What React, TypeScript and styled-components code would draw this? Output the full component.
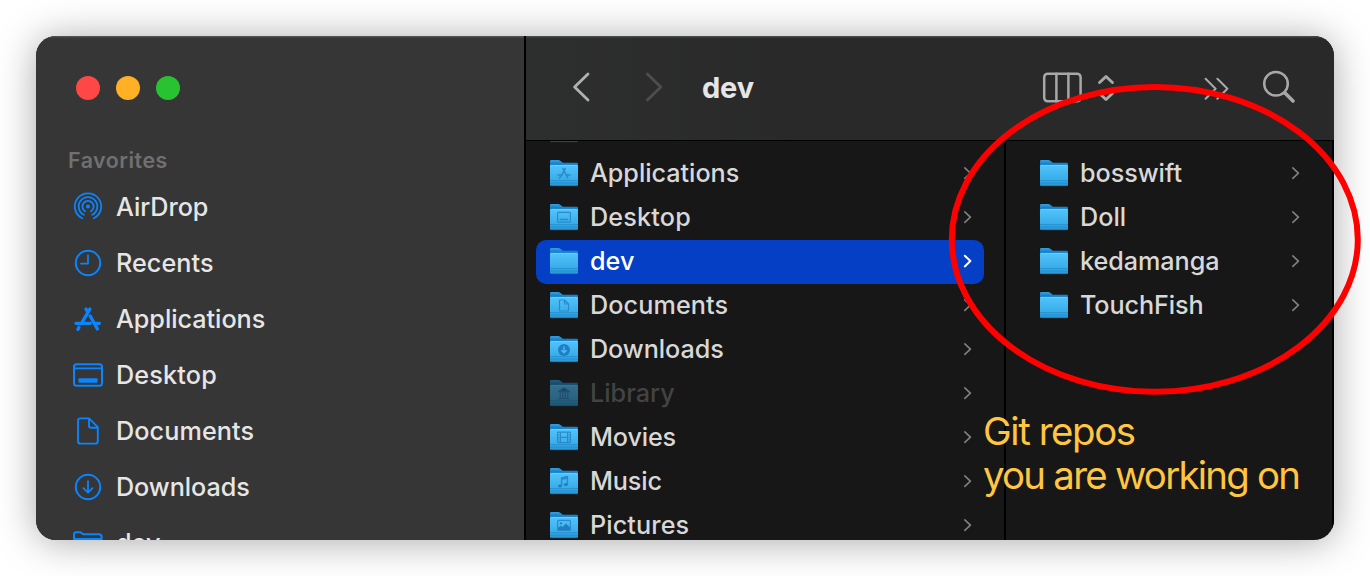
import React from 'react';
import styled, { createGlobalStyle } from 'styled-components';

const GlobalStyle = createGlobalStyle`
  * { box-sizing: border-box; }
  body { margin: 0; background: #fff; overflow: hidden; }
`;

const Stage = styled.div`
  position: relative;
  width: 1370px;
  height: 576px;
  padding: 36px;
  overflow: hidden;
  background: #fff;
  font-family: Inter, 'Liberation Sans', sans-serif;
`;

const Window = styled.div`
  display: flex;
  width: 1298px;
  height: 504px;
  border-radius: 20px;
  overflow: hidden;
  background: #171717;
`;

const Shadow = styled.div`
  width: 1298px;
  height: 504px;
  border-radius: 20px;
  box-shadow: 0 2px 38px rgba(0, 0, 0, 0.34);
`;

const Sidebar = styled.aside`
  flex: 0 0 490px;
  border-right: 2px solid #000;
  background: #363636;
  box-shadow: inset 0 1.5px 0 #505050;
`;

const Lights = styled.div`
  display: flex;
  gap: 16px;
  padding: 40px 0 0 40px;
`;

const Light = styled.span<{ $color: string }>`
  width: 24px;
  height: 24px;
  border-radius: 50%;
  background: ${(p) => p.$color};
`;

const SectionTitle = styled.div<{ $spacing: number }>`
  margin: 47px 0 6px 32px;
  height: 26px;
  line-height: 26px;
  font-size: 21.4px;
  font-weight: 600;
  letter-spacing: ${(p) => p.$spacing}px;
  color: #707070;
`;

const SideRow = styled.div`
  display: flex;
  align-items: center;
  height: 56px;
  padding-left: 37px;
  gap: 13px;
`;

const Label = styled.span<{ $spacing?: number; $color?: string; $weight?: number }>`
  white-space: nowrap;
  font-size: 25.2px;
  line-height: 32px;
  font-weight: ${(p) => p.$weight ?? 450};
  letter-spacing: ${(p) => p.$spacing ?? 0}px;
  color: ${(p) => p.$color ?? '#d8d8d8'};
`;

const SideSvg = styled.svg`
  flex: none;
  width: 30px;
  height: 30px;
  fill: none;
  stroke: #0a84ff;
  stroke-width: 2;
  stroke-linecap: round;
  stroke-linejoin: round;
  overflow: visible;
`;

const Main = styled.main`
  flex: 1;
  display: flex;
  flex-direction: column;
  min-width: 0;
`;

const Toolbar = styled.header`
  display: flex;
  align-items: center;
  flex: none;
  height: 105px;
  padding: 0 37px 2px 45px;
  border-bottom: 1.5px solid #000;
  background: linear-gradient(90deg, #2d2f2e 0, #292929 270px);
  box-shadow: inset 0 1.5px 0 #484a49;
`;

const ToolSvg = styled.svg<{ $color?: string; $ml?: number }>`
  flex: none;
  margin-left: ${(p) => p.$ml ?? 0}px;
  fill: none;
  stroke: ${(p) => p.$color ?? '#a8a8a8'};
  stroke-linecap: round;
  stroke-linejoin: round;
`;

const Title = styled.h1`
  flex: 1;
  margin: 0 0 0 38px;
  font-size: 29px;
  font-weight: 700;
  letter-spacing: -0.2px;
  color: #e6e6e6;
`;

const Columns = styled.div`
  flex: 1;
  display: flex;
  min-height: 0;
  border-right: 2px solid #000;
`;

const Column = styled.div<{ $width: number }>`
  flex: 0 0 ${(p) => p.$width}px;
  overflow: hidden;
  padding: 11px 20px 0 10px;
`;

const ScrolledColumn = styled(Column)`
  padding-top: 0;
  & > :first-child {
    margin-top: -33px;
  }
`;

const RepoColumn = styled(Column)`
  border-left: 2px solid #000;
  padding-left: 20px;
`;

const FileRow = styled.div<{ $selected?: boolean }>`
  display: flex;
  align-items: center;
  height: 44px;
  padding: 0 12px 2px 14px;
  border-radius: 10px;
  background: ${(p) => (p.$selected ? '#053fc6' : 'transparent')};
`;

const FileName = styled(Label)`
  flex: 1;
  margin-left: 12px;
`;

const FolderSvg = styled.svg<{ $dim?: boolean }>`
  flex: none;
  width: 28px;
  height: 28px;
  opacity: ${(p) => (p.$dim ? 0.5 : 1)};
  overflow: visible;
`;

const ChevronSvg = styled.svg<{ $selected?: boolean }>`
  flex: none;
  width: 10px;
  height: 14px;
  margin-bottom: 1px;
  fill: none;
  stroke: ${(p) => (p.$selected ? '#ffffff' : '#808080')};
  stroke-width: ${(p) => (p.$selected ? 2 : 1.6)};
  stroke-linecap: round;
  stroke-linejoin: round;
`;

const Ring = styled.svg`
  position: absolute;
  left: 948px;
  top: 83px;
  width: 414px;
  height: 313px;
  fill: none;
  stroke: #ff0000;
  stroke-width: 6;
`;

const Note = styled.div`
  position: absolute;
  left: 983px;
  top: 409px;
  font-size: 38.4px;
  font-weight: 420;
  line-height: 44px;
  color: #ffc642;
  white-space: nowrap;
`;

const NoteLine = styled.div<{ $spacing: number }>`
  letter-spacing: ${(p) => p.$spacing}px;
`;

const sideIcons: Record<string, React.ReactNode> = {
  airdrop: (
    <>
      <path d="M-5.9 11.3A13.2 13.2 0 1 1 5.9 11.3M-4.2 7.8A9.3 9.3 0 1 1 4.2 7.8M-2.9 4.3A5.6 5.6 0 1 1 2.9 4.3" strokeWidth="1.8" />
      <circle cy="-.5" r="2" fill="#0a84ff" stroke="none" />
    </>
  ),
  recents: (
    <>
      <circle r="12.2" />
      <path d="M0-7.8V.6H-7" strokeWidth="1.7" />
    </>
  ),
  apps: (
    <path d="M1.9-9.9L-6.2 3.8M-2-9.9L-.6-7.6M2.2-3L9.4 9.9M-12 4.3H2.4M8 4.3H11.4M-9.1 8.6L-10.1 10.3" strokeWidth="3.3" />
  ),
  desktop: (
    <>
      <rect x="-14" y="-10.8" width="28" height="21.6" rx="2.6" />
      <path d="M-14-6.6H14" strokeWidth="1.8" />
      <rect x="-9.6" y="3.3" width="19.2" height="4.4" rx="1" fill="#0a84ff" stroke="none" />
    </>
  ),
  document: (
    <path d="M1-12.6H-7.6Q-10-12.6-10-10.2V10.2Q-10 12.6-7.6 12.6H7.4Q9.8 12.6 9.8 10.2V-3.8L1-12.6V-5.2Q1-3.2 3-3.2H9.6" strokeWidth="1.9" />
  ),
  download: (
    <>
      <circle r="12.2" />
      <path d="M0-5.8V5.4M-4.5 1.2L0 5.6L4.5 1.2" strokeWidth="1.8" />
    </>
  ),
  folder: (
    <path d="M-14 8V-8.5Q-14-10.8-11.6-10.8H-7.5L-4.8-8.7H11Q13.6-8.7 13.6-6.2V8Q13.6 10.5 11 10.5H-11.5Q-14 10.5-14 8ZM-13.5-4H13.5" />
  ),
};

const SideIcon = ({ name }: { name: string }) => (
  <SideSvg viewBox="-15 -15 30 30">{sideIcons[name]}</SideSvg>
);

const emblems: Record<string, React.ReactNode> = {
  apps: (
    <path d="M15.2 9.5L10.8 17.8M12.8 9.5L17.8 18.8M8 16H12.5M16 16H20M9.7 18.4L9.3 19" strokeWidth="1.5" />
  ),
  desktop: (
    <>
      <rect x="7.6" y="9.4" width="12.8" height="9.8" rx="1" />
      <path d="M10.3 16.5H17.7" strokeWidth="1.4" />
    </>
  ),
  document: <path d="M14.5 9H10.2Q9.5 9 9.5 9.8V19.2Q9.5 20 10.2 20H17.8Q18.5 20 18.5 19.2V13ZM14.5 9V13H18.5" />,
  download: (
    <>
      <circle cx="14" cy="15" r="6" fill="#1f7fc4" stroke="none" />
      <path d="M14 12V17.6M11.7 15.6L14 17.8L16.3 15.6" stroke="#4dbcf5" strokeWidth="1.4" />
    </>
  ),
  library: (
    <path d="M14 9L8.6 12.2H19.4ZM8.6 12.5H19.4M10.2 13V19M12.7 13V19M15.3 13V19M17.8 13V19M8.3 19.6H19.7" fill="#1a6da8" strokeWidth="1.3" />
  ),
  movies: (
    <>
      <rect x="7.6" y="9.2" width="12.8" height="10.4" rx=".6" />
      <path d="M10.4 9.6V19.6M17.6 9.6V19.6M10.4 14.4H17.6" />
      <path d="M7.6 12H10.4M7.6 14.5H10.4M7.6 17H10.4M17.6 12H20.4M17.6 14.5H20.4M17.6 17H20.4" strokeWidth=".6" />
    </>
  ),
  music: (
    <>
      <path d="M11.6 18.6V11L17.4 9.6V17.2M11.6 12.3L17.4 10.9" strokeWidth="1.5" />
      <ellipse cx="10" cy="19" rx="2" ry="1.5" fill="#1f7fc4" stroke="none" />
      <ellipse cx="15.9" cy="17.6" rx="2" ry="1.5" fill="#1f7fc4" stroke="none" />
    </>
  ),
  pictures: (
    <>
      <rect x="7.6" y="9.4" width="12.8" height="10" rx="1" />
      <circle cx="11" cy="12.4" r="1.1" fill="#1f7fc4" stroke="none" />
      <path d="M8 19V16.8L11 14.8L12.6 16L16 12.6L20 16.6V19Z" fill="#1f7fc4" stroke="none" />
    </>
  ),
};

const Folder = ({ emblem, dim }: { emblem?: string; dim?: boolean }) => (
  <FolderSvg viewBox="0 0 28 28" $dim={dim}>
    <defs>
      <linearGradient id="folderFront" x1="0" y1="0" x2="0" y2="1">
        <stop offset="0" stopColor="#52c4fc" />
        <stop offset="0.7" stopColor="#39ade9" />
        <stop offset="1" stopColor="#2493d6" />
      </linearGradient>
      <linearGradient id="folderBack" x1="0" y1="0" x2="0" y2="1">
        <stop offset="0" stopColor="#35a0df" />
        <stop offset="0.2" stopColor="#1580c8" />
      </linearGradient>
    </defs>
    <path d="M0 2.2Q0 1 1.2 1H8.4Q9.4 1 10.2 1.7L11.5 2.8Q12.4 3.8 13.6 3.8H26.8Q28 3.8 28 5V20H0Z" fill="url(#folderBack)" />
    <path d="M0 7.2Q0 6 1.2 6H26.8Q28 6 28 7.2V25.8Q28 27 26.8 27H1.2Q0 27 0 25.8Z" fill="url(#folderFront)" />
    <path d="M.8 6.4H27.2" stroke="#70d6ff" strokeWidth=".8" />
    <path d="M0 21.6H28M0 24H28" stroke="#2089ca" strokeWidth=".7" />
    <path d="M.6 26.7H27.4" stroke="#1673b2" strokeWidth=".7" />
    {emblem && (
      <g fill="none" stroke="#2a8acb" strokeWidth="1.2" strokeLinecap="round" strokeLinejoin="round">
        {emblems[emblem]}
      </g>
    )}
  </FolderSvg>
);

const Chevron = ({ selected }: { selected?: boolean }) => (
  <ChevronSvg viewBox="0 0 10 14" $selected={selected}>
    <path d="M2.8 1.8L8.4 7.1L2.8 12.4" />
  </ChevronSvg>
);

const favorites = [
  { icon: 'airdrop', text: 'AirDrop', spacing: -0.05 },
  { icon: 'recents', text: 'Recents', spacing: 0.05 },
  { icon: 'apps', text: 'Applications', spacing: -0.03 },
  { icon: 'desktop', text: 'Desktop', spacing: 0.17 },
  { icon: 'document', text: 'Documents', spacing: 0.1 },
  { icon: 'download', text: 'Downloads', spacing: -0.07 },
  { icon: 'folder', text: 'dev', spacing: 0 },
];

interface Entry {
  text: string;
  emblem?: string;
  spacing: number;
  selected?: boolean;
  dim?: boolean;
}

const home: Entry[] = [
  { text: 'Applications', emblem: 'apps', spacing: -0.03 },
  { text: 'Desktop', emblem: 'desktop', spacing: 0.17 },
  { text: 'dev', spacing: 0, selected: true },
  { text: 'Documents', emblem: 'document', spacing: 0.1 },
  { text: 'Downloads', emblem: 'download', spacing: -0.07 },
  { text: 'Library', emblem: 'library', spacing: 0, dim: true },
  { text: 'Movies', emblem: 'movies', spacing: -0.15 },
  { text: 'Music', emblem: 'music', spacing: -0.15 },
  { text: 'Pictures', emblem: 'pictures', spacing: 0.1 },
];

const repos: Entry[] = [
  { text: 'bosswift', spacing: -0.05 },
  { text: 'Doll', spacing: 0 },
  { text: 'kedamanga', spacing: -0.05 },
  { text: 'TouchFish', spacing: -0.1 },
];

const File = ({ entry }: { entry: Entry }) => (
  <FileRow $selected={entry.selected}>
    <Folder emblem={entry.emblem} dim={entry.dim} />
    <FileName
      $spacing={entry.spacing}
      $weight={entry.selected ? 500 : 450}
      $color={entry.selected ? '#ffffff' : entry.dim ? '#434343' : '#d8d8d8'}
    >
      {entry.text}
    </FileName>
    <Chevron selected={entry.selected} />
  </FileRow>
);

export default function App() {
  return (
    <Stage>
      <GlobalStyle />
      <Shadow>
        <Window>
          <Sidebar>
            <Lights>
              <Light $color="#ff4746" />
              <Light $color="#ffb025" />
              <Light $color="#29c231" />
            </Lights>
            <SectionTitle $spacing={0.5}>Favorites</SectionTitle>
            {favorites.map((f) => (
              <SideRow key={f.text}>
                <SideIcon name={f.icon} />
                <Label $spacing={f.spacing} $color="#e6e6e6">{f.text}</Label>
              </SideRow>
            ))}
          </Sidebar>
          <Main>
            <Toolbar>
              <ToolSvg width="20" height="32" viewBox="0 0 20 32" strokeWidth="2.8" $color="#b0b0b0">
                <path d="M17 3L3.6 16L17 29" />
              </ToolSvg>
              <ToolSvg width="20" height="32" viewBox="0 0 20 32" strokeWidth="2.8" $color="#4e4e4e" $ml={53}>
                <path d="M3.4 3L16.8 16L3.4 29" />
              </ToolSvg>
              <Title>dev</Title>
              <ToolSvg width="40" height="32" viewBox="0 0 40 32" strokeWidth="2.5">
                <rect x="2.2" y="2.7" width="36.4" height="27.6" rx="3.5" />
                <path d="M14.4 2.7V30.3M26.4 2.7V30.3" />
              </ToolSvg>
              <ToolSvg width="18" height="32" viewBox="0 0 18 32" strokeWidth="3" $ml={15}>
                <path d="M2.6 11.5L9 5.5L15.4 11.5M2.6 22.5L9 28.5L15.4 22.5" />
              </ToolSvg>
              <ToolSvg width="26" height="26" viewBox="0 0 26 26" strokeWidth="2" $ml={88}>
                <path d="M2.6 4.8L12.6 14.8L2.6 24.8M14.4 4.8L24.4 14.8L14.4 24.8" />
              </ToolSvg>
              <ToolSvg width="36" height="36" viewBox="0 0 36 36" strokeWidth="2.5" $ml={32}>
                <circle cx="15" cy="14.8" r="11.8" />
                <path d="M24 24L32 32" strokeWidth="3.6" />
              </ToolSvg>
            </Toolbar>
            <Columns>
              <ScrolledColumn $width={478}>
                <FileRow>
                  <Folder dim />
                </FileRow>
                {home.map((e) => (
                  <File key={e.text} entry={e} />
                ))}
              </ScrolledColumn>
              <RepoColumn $width={328}>
                {repos.map((e) => (
                  <File key={e.text} entry={e} />
                ))}
              </RepoColumn>
            </Columns>
          </Main>
        </Window>
      </Shadow>
      <Ring viewBox="0 0 414 313">
        <ellipse cx="206.8" cy="156.4" rx="203" ry="152.4" />
      </Ring>
      <Note>
        <NoteLine $spacing={-1.4}>Git repos</NoteLine>
        <NoteLine $spacing={-1.75}>you are working on</NoteLine>
      </Note>
    </Stage>
  );
}
